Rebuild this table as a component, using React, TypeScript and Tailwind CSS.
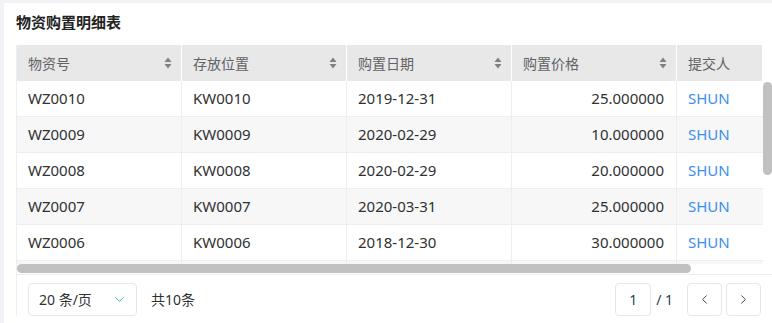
import { ChevronDown, ChevronLeft, ChevronRight } from 'lucide-react';

const rows = [
  { code: 'WZ0010', loc: 'KW0010', date: '2019-12-31', price: '25.000000', user: 'SHUN' },
  { code: 'WZ0009', loc: 'KW0009', date: '2020-02-29', price: '10.000000', user: 'SHUN' },
  { code: 'WZ0008', loc: 'KW0008', date: '2020-02-29', price: '20.000000', user: 'SHUN' },
  { code: 'WZ0007', loc: 'KW0007', date: '2020-03-31', price: '25.000000', user: 'SHUN' },
  { code: 'WZ0006', loc: 'KW0006', date: '2018-12-30', price: '30.000000', user: 'SHUN' },
];

function SortIcon() {
  return (
    <svg width="8" height="12" viewBox="0 0 8 12" className="shrink-0">
      <path d="M4 0.5 L7.5 5 L0.5 5 Z" fill="#7d8088" />
      <path d="M4 11.5 L7.5 7 L0.5 7 Z" fill="#7d8088" />
    </svg>
  );
}

function HeadCell({ label, width, sortable = true }: { label: string; width: string; sortable?: boolean }) {
  return (
    <div className={`${width} shrink-0 h-full flex items-center justify-between pl-[11px] pr-[9px] border-r border-white`}>
      <span>{label}</span>
      {sortable && <SortIcon />}
    </div>
  );
}

export default function App() {
  return (
    <div
      className="w-[772px] h-[323px] overflow-hidden bg-[#f0f2f5] pl-[4px] pt-[3px]"
      style={{ fontFamily: '"Noto Sans", "Noto Sans CJK SC", sans-serif' }}
    >
      <div className="h-full bg-white pl-[12px] flex flex-col">
        {/* 标题 */}
        <div className="mt-[9px] mb-[13px] h-[20px] leading-[20px] text-[15px] font-bold text-[#222]">
          物资购置明细表
        </div>

        <div className="border-l border-[#ebeef5] flex flex-col">
          {/* 表头 */}
          <div className="flex h-[36px] text-[14px] text-[#606266]">
            <div className="flex h-full bg-[#e8e8e8]">
              <HeadCell label="物资号" width="w-[165px]" />
              <HeadCell label="存放位置" width="w-[165px]" />
              <HeadCell label="购置日期" width="w-[165px]" />
              <HeadCell label="购置价格" width="w-[165px]" />
              <HeadCell label="提交人" width="w-[86px]" sortable={false} />
            </div>
          </div>

          {/* 表体 */}
          <div className="flex h-[183px] overflow-hidden">
            <div className="w-[746px] shrink-0 text-[15px] text-[#303133]">
              {rows.map((r, i) => (
                <div
                  key={r.code}
                  className={`flex h-[36px] border-b border-[#ebeef5] ${i % 2 === 1 ? 'bg-[#f7f7f7]' : 'bg-white'}`}
                >
                  <div className="w-[165px] shrink-0 flex items-center pl-[11px] border-r border-[#ebeef5]">{r.code}</div>
                  <div className="w-[165px] shrink-0 flex items-center pl-[11px] border-r border-[#ebeef5]">{r.loc}</div>
                  <div className="w-[165px] shrink-0 flex items-center pl-[11px] border-r border-[#ebeef5]">{r.date}</div>
                  <div className="w-[165px] shrink-0 flex items-center justify-end pr-[12px] border-r border-[#ebeef5]">{r.price}</div>
                  <div className="w-[86px] shrink-0 flex items-center pl-[11px] text-[#3c8ef0]">{r.user}</div>
                </div>
              ))}
              {/* 下一行只露出一点 */}
              <div className="flex h-[36px] bg-[#f7f7f7]">
                <div className="w-[165px] shrink-0 border-r border-[#ebeef5]" />
                <div className="w-[165px] shrink-0 border-r border-[#ebeef5]" />
                <div className="w-[165px] shrink-0 border-r border-[#ebeef5]" />
                <div className="w-[165px] shrink-0 border-r border-[#ebeef5]" />
              </div>
            </div>
            <div className="w-[9px] shrink-0 pt-[1px]">
              <div className="w-[9px] h-[93px] rounded-full bg-[#c1c1c1]" />
            </div>
          </div>

          {/* 横向滚动条 */}
          <div className="h-[10px]">
            <div className="w-[674px] h-[9px] rounded-full bg-[#c1c1c1]" />
          </div>

          {/* 分页 */}
          <div className="border-t border-[#ebeef5] pt-[8px] pl-[11px] pr-[11px] flex items-center text-[14px] text-[#303133]">
            <div className="w-[109px] h-[33px] border border-[#e4e7ed] rounded-[4px] flex items-center justify-between pl-[10px] pr-[9px]">
              <span>20 条/页</span>
              <ChevronDown size={15} strokeWidth={1.6} color="#3eb4a4" />
            </div>
            <span className="ml-[14px]">共10条</span>
            <div className="ml-auto flex items-center text-[#2c3e50]">
              <div className="w-[36px] h-[33px] border border-[#e4e7ed] rounded-[4px] flex items-center justify-center">1</div>
              <span className="ml-[5px] mr-[14px]">/ 1</span>
              <div className="w-[35px] h-[33px] border border-[#e4e7ed] rounded-[4px] flex items-center justify-center">
                <ChevronLeft size={15} strokeWidth={1.5} color="#2c3e50" />
              </div>
              <div className="ml-[4px] w-[35px] h-[33px] border border-[#e4e7ed] rounded-[4px] flex items-center justify-center">
                <ChevronRight size={15} strokeWidth={1.5} color="#2c3e50" />
              </div>
            </div>
          </div>
        </div>
      </div>
    </div>
  );
}
